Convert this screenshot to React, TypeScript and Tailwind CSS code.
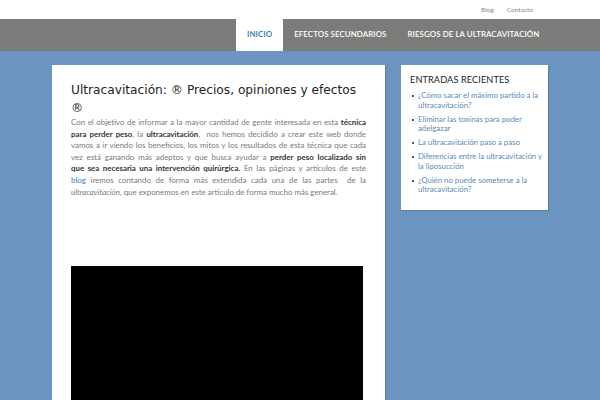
import React from 'react'

const POSTS = [
  '¿Cómo sacar el máximo partido a la ultracavitación?',
  'Eliminar las toxinas para poder adelgazar',
  'La ultracavitación paso a paso',
  'Diferencias entre la ultracavitación y la liposucción',
  '¿Quién no puede someterse a la ultracavitación?',
]

// justified line, last line of the paragraph stays left
const Line = ({ children, last }: { children: React.ReactNode; last?: boolean }) => (
  <div className={last ? 'whitespace-nowrap' : 'whitespace-nowrap text-justify [text-align-last:justify]'}>{children}</div>
)

export default function App() {
  return (
    <div className="w-[600px] h-[400px] overflow-hidden bg-[#6b94c0]" style={{ fontFamily: "Lato, 'Open Sans', sans-serif" }}>
      {/* top bar */}
      <div className="h-[19px] bg-white flex items-center justify-end gap-[13px] pr-[67px] text-[6.5px] text-[#888]">
        <span>Blog</span>
        <span>Contacto</span>
      </div>

      {/* nav */}
      <nav className="h-[32px] bg-[#7b7c7a] flex items-stretch pl-[236px] text-[7.9px] tracking-[0.01em]">
        <a className="bg-white text-[#3b83b0] font-bold px-[11px] flex items-center">INICIO</a>
        <a className="text-white font-semibold px-[11px] flex items-center">EFECTOS SECUNDARIOS</a>
        <a className="text-white font-semibold px-[10px] flex items-center">RIESGOS DE LA ULTRACAVITACIÓN</a>
      </nav>

      {/* body */}
      <div className="flex items-start gap-[16px] pl-[52px] pt-[14px]">
        <main className="w-[333px] h-[400px] bg-white px-[19px] pt-[16px] shadow-[1px_1px_1px_rgba(0,0,0,0.12)]">
          <h1 className="text-[12.2px] leading-[18px] text-[#222]" style={{ fontFamily: "'DejaVu Sans', sans-serif" }}>
            <span className="whitespace-nowrap">Ultracavitación: ® Precios, opiniones y efectos</span>
            <br />®
          </h1>
          <div className="text-[7.9px] leading-[11.6px] text-[#7a7a7a]">
            <Line>Con el objetivo de informar a la mayor cantidad de gente interesada en esta <b className="text-[#333]">técnica</b></Line>
            <Line><b className="text-[#333]">para perder peso</b>, la <b className="text-[#333]">ultracavitación</b>,&nbsp; nos hemos decidido a crear este web donde</Line>
            <Line>vamos a ir viendo los beneficios, los mitos y los resultados de esta técnica que cada</Line>
            <Line>vez está ganando más adeptos y que busca ayudar a <b className="text-[#333]">perder peso localizado sin</b></Line>
            <Line><b className="text-[#333]">que sea necesaria una intervención quirúrgica.</b> En las páginas y artículos de este</Line>
            <Line><a className="text-[#3b83b0]">blog</a> iremos contando de forma más extendida cada una de las partes&nbsp; de la</Line>
            <Line last><i>ultracavitación</i>, que exponemos en este artículo de forma mucho más general.</Line>
          </div>
          <div className="mt-[68px] w-[292px] h-[200px] bg-black" />
        </main>

        <aside className="w-[147px] bg-white pl-[9px] pr-[6px] pt-[8px] pb-[15px] shadow-[1px_1px_1px_rgba(0,0,0,0.15)]">
          <h3 className="text-[9.2px] leading-[14px] text-[#222] tracking-[0.01em]">ENTRADAS RECIENTES</h3>
          <ul className="mt-[4px] flex flex-col gap-[4px]">
            {POSTS.map(p => (
              <li key={p} className="flex text-[7.8px] leading-[9.8px] text-[#5a8bb6]">
                <span className="w-[8px] flex-none pt-[4px] pl-[2px]">
                  <span className="block w-[2px] h-[2px] bg-[#555]" />
                </span>
                <span>{p}</span>
              </li>
            ))}
          </ul>
        </aside>
      </div>
    </div>
  )
}
